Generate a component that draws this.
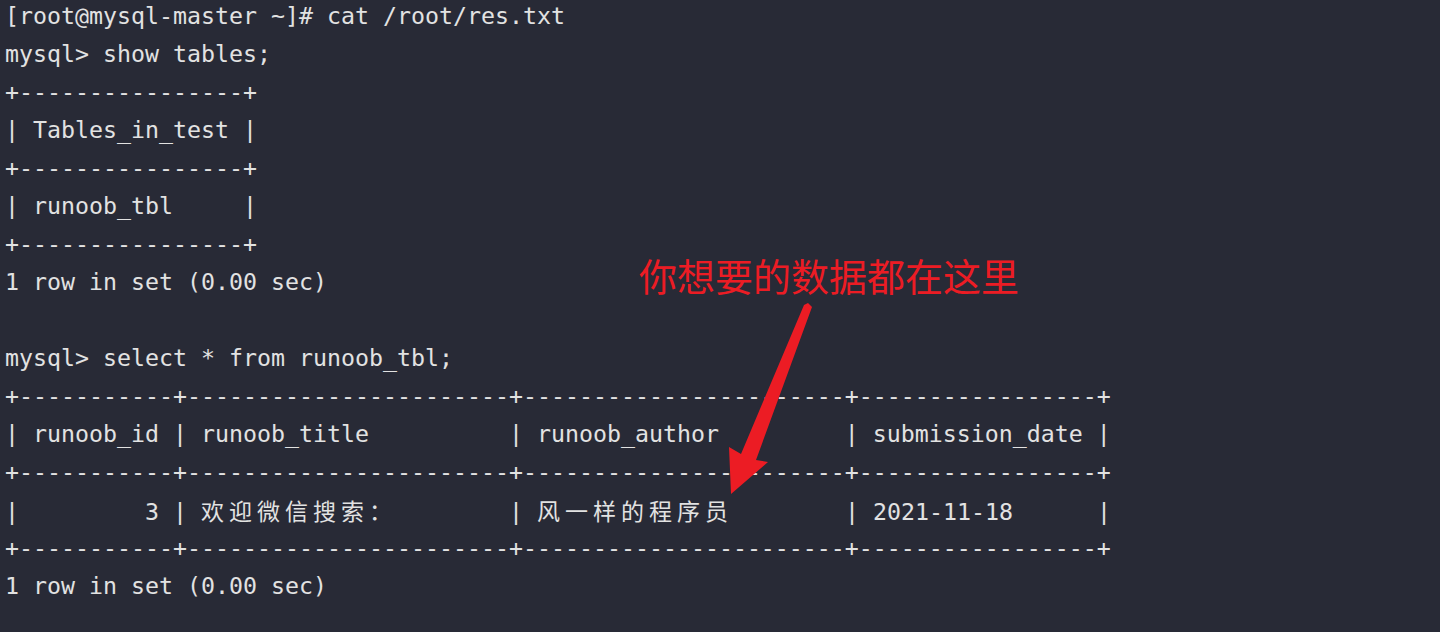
const mono = "font-['DejaVu_Sans_Mono','Liberation_Mono','Noto_Sans_CJK_SC',monospace]";

const Wide = ({ text }: { text: string }) => (
  <>
    {Array.from(text).map((ch, i) => (
      <span
        key={i}
        className="inline-block w-[28px] font-['Noto_Sans_CJK_SC',sans-serif] text-[23px]"
      >
        {ch}
      </span>
    ))}
  </>
);

const Line = ({ children }: { children?: React.ReactNode }) => (
  <div className="h-[38px] whitespace-pre leading-[38px]">{children}</div>
);

const smallBorder = "+" + "-".repeat(16) + "+";
const bigBorder =
  "+" +
  "-".repeat(11) +
  "+" +
  "-".repeat(23) +
  "+" +
  "-".repeat(23) +
  "+" +
  "-".repeat(17) +
  "+";

export default function App() {
  return (
    <div className="relative h-[632px] w-full overflow-hidden bg-[#282a36] text-[#e2e2e2]">
      <div className={`${mono} -mt-[3px] pl-[5px] text-[23.25px]`}>
        <Line>[root@mysql-master ~]# cat /root/res.txt</Line>
        <Line>mysql&gt; show tables;</Line>
        <Line>{smallBorder}</Line>
        <Line>| Tables_in_test |</Line>
        <Line>{smallBorder}</Line>
        <Line>{"| runoob_tbl     |"}</Line>
        <Line>{smallBorder}</Line>
        <Line>1 row in set (0.00 sec)</Line>
        <Line />
        <Line>mysql&gt; select * from runoob_tbl;</Line>
        <Line>{bigBorder}</Line>
        <Line>
          {"| runoob_id | runoob_title" +
            " ".repeat(9) +
            " | runoob_author" +
            " ".repeat(8) +
            " | submission_date |"}
        </Line>
        <Line>{bigBorder}</Line>
        <Line>
          {"|         3 | "}
          <Wide text="欢迎微信搜索：" />
          {" ".repeat(7) + " | "}
          <Wide text="风一样的程序员" />
          {" ".repeat(7) + " | 2021-11-18      |"}
        </Line>
        <Line>{bigBorder}</Line>
        <Line>1 row in set (0.00 sec)</Line>
      </div>

      {/* red annotation */}
      <div className="absolute left-[639px] top-[256px] font-['Noto_Sans_CJK_SC',sans-serif] text-[38px] leading-none text-[#ec1c24]">
        你想要的数据都在这里
      </div>
      <svg
        className="pointer-events-none absolute inset-0"
        width="1440"
        height="632"
        viewBox="0 0 1440 632"
      >
        <polygon
          points="804,305 808,303 812,307 756,460 768,462 731,494 729,447 741,454"
          fill="#ec1c24"
        />
      </svg>
    </div>
  );
}
